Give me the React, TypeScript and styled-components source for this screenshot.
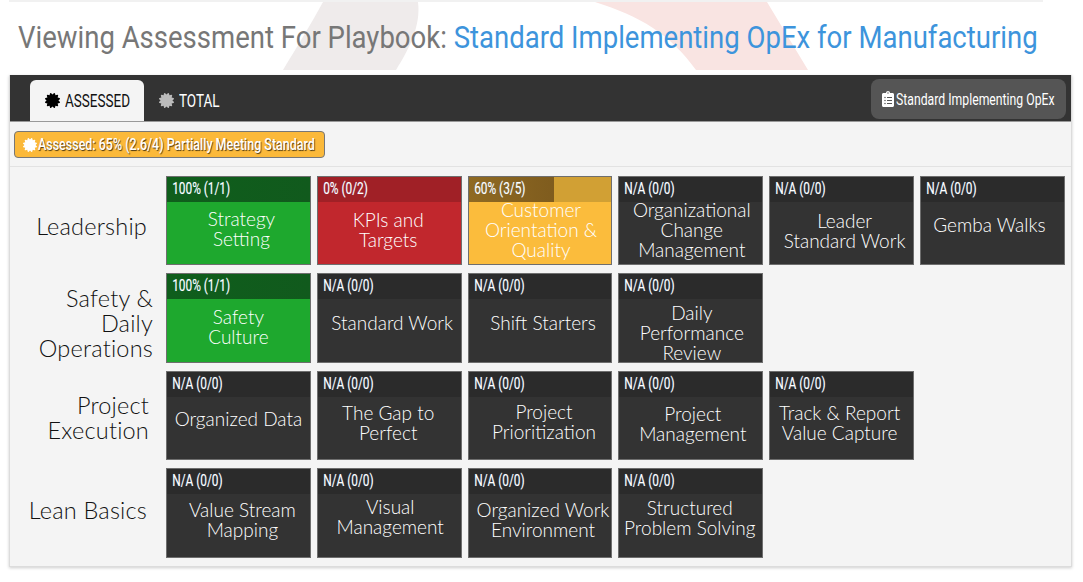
import React from 'react'
import styled, { createGlobalStyle } from 'styled-components'
import { FaCertificate, FaClipboardList } from 'react-icons/fa'

const GlobalStyle = createGlobalStyle`
  html, body {
    margin: 0;
    background: #fff;
    font-family: Roboto, "Liberation Sans", sans-serif;
  }
`

const Page = styled.div`
  width: 1083px;
  height: 582px;
  overflow: hidden;
  position: relative;
`
const Heading = styled.div`
  position: relative;
  height: 75px;
  margin: 0 40px 0 9px;
  box-sizing: border-box;
  border-top: 2px solid #f1f1f1;
  padding: 16px 0 0 9px;
  overflow: hidden;
`
const Watermark = styled.svg`
  position: absolute;
  left: -9px;
  top: -2px;
`
const Title = styled.h1`
  position: relative;
  margin: 0;
  font-size: 32px;
  line-height: 38px;
  font-weight: 400;
  color: #777;
  white-space: nowrap;
  transform: scaleX(0.86);
  transform-origin: left center;
`
const Playbook = styled.span`
  color: #3d94dc;
`
const Panel = styled.div`
  margin-left: 9px;
  width: 1063px;
  height: 492px;
  box-sizing: border-box;
  background: #f4f4f4;
  border: 1px solid #dcdcdc;
  border-top: 0;
  box-shadow: 0 1px 3px rgba(0, 0, 0, 0.2);
`
const TabBar = styled.div`
  height: 47px;
  background: #333;
  border-bottom: 1px solid #999;
  box-sizing: border-box;
  display: flex;
  align-items: flex-end;
  padding: 0 5px 0 20px;
`
const Tab = styled.div<{ $active?: boolean }>`
  width: 114px;
  height: 41px;
  box-sizing: border-box;
  padding-left: 15px;
  display: flex;
  align-items: center;
  gap: 5px;
  border-radius: 6px 6px 0 0;
  background: ${({ $active }) => ($active ? '#f4f4f4' : 'transparent')};
  color: ${({ $active }) => ($active ? '#111' : '#fff')};
  font-size: 18px;
`
const TabLabel = styled.span`
  display: inline-block;
  flex: none;
  transform: scaleX(0.75);
  transform-origin: left center;
`
const TabIcon = styled(FaCertificate)<{ $tone: string }>`
  color: ${({ $tone }) => $tone};
  font-size: 15px;
  flex: none;
`
const PlaybookButton = styled.div`
  margin-left: auto;
  align-self: flex-start;
  margin-top: 4px;
  width: 195px;
  height: 40px;
  box-sizing: border-box;
  border-radius: 8px;
  background: #555;
  color: #fff;
  font-size: 17px;
  display: flex;
  align-items: center;
  padding-left: 9px;
  white-space: nowrap;
  svg {
    flex: none;
  }
`
const ButtonLabel = styled.span`
  display: inline-block;
  flex: none;
  transform: scaleX(0.72);
  transform-origin: left center;
`
const SummaryStrip = styled.div`
  height: 45px;
  box-sizing: border-box;
  border-bottom: 1px solid #e2e2e2;
  padding: 9px 0 0 4px;
`
const Badge = styled.div`
  width: 311px;
  height: 27px;
  box-sizing: border-box;
  background: #fbb93a;
  border: 1px solid #777;
  border-radius: 4px;
  color: #fff;
  font-size: 16px;
  font-weight: 500;
  display: flex;
  align-items: center;
  padding-left: 8px;
  gap: 1px;
  white-space: nowrap;
  text-shadow: 1px 1px 1px rgba(0, 0, 0, 0.7);
  svg {
    flex: none;
  }
`
const BadgeLabel = styled.span`
  display: inline-block;
  flex: none;
  transform: scaleX(0.78);
  transform-origin: left center;
`
const Matrix = styled.div`
  padding-top: 9px;
  display: flex;
  flex-direction: column;
  gap: 8px;
`
const Row = styled.div`
  display: flex;
  height: 89px;
  &:nth-child(even) {
    height: 90px;
  }
`
const RowLabel = styled.div<{ $right: number; $top: number }>`
  width: 156px;
  flex: none;
  box-sizing: border-box;
  padding-right: ${({ $right }) => $right}px;
  margin-top: ${({ $top }) => $top}px;
  align-self: center;
  text-align: right;
  white-space: pre;
  font-family: Lato, sans-serif;
  font-weight: 300;
  font-size: 23.5px;
  letter-spacing: 0.2px;
  line-height: 25px;
  color: #111;
`
const Cards = styled.div`
  display: grid;
  grid-template-columns: repeat(6, 144.8px);
  column-gap: 6px;
`

const palette = {
  green: { body: '#1ea82e', track: '#1a8f28', fill: 'linear-gradient(90deg,#0f5e1c,#115a1d)' },
  red: { body: '#c1272d', track: '#a02026', fill: 'none' },
  yellow: { body: '#fbbc3c', track: '#d1a034', fill: 'linear-gradient(90deg,#8f6a22,#7f5c1e)' },
  dark: { body: '#333', track: '#2b2b2b', fill: 'none' },
}
type Tone = keyof typeof palette

const Card = styled.div<{ $tone: Tone }>`
  box-sizing: border-box;
  border: 1px solid #6e6e6e;
  background: ${({ $tone }) => palette[$tone].body};
  color: #fff;
  overflow: hidden;
`
const ScoreBar = styled.div<{ $tone: Tone }>`
  position: relative;
  height: 25px;
  background: ${({ $tone }) => palette[$tone].track};
`
const ScoreFill = styled.div<{ $tone: Tone }>`
  position: absolute;
  left: 0;
  top: 0;
  bottom: 0;
  background: ${({ $tone }) => palette[$tone].fill};
`
const ScoreText = styled.div`
  position: relative;
  padding-left: 5px;
  font-size: 16px;
  line-height: 24px;
  font-weight: 400;
  white-space: nowrap;
  transform: scaleX(0.74) translateX(2px);
  transform-origin: left center;
  text-shadow: 0 0 1px rgba(140, 200, 255, 0.5);
`
const CardTitle = styled.div<{ $top: number; $shift: number }>`
  margin-top: ${({ $top }) => $top}px;
  margin-left: ${({ $shift }) => Math.max($shift, 0) * 2}px;
  margin-right: ${({ $shift }) => Math.max(-$shift, 0) * 2}px;
  text-align: center;
  white-space: pre;
  font-family: Lato, sans-serif;
  font-size: 19px;
  line-height: 20px;
  font-weight: 300;
`

type CardData = { title: string; score: string; top: number; shift: number; tone?: Tone; fill?: number }

const NA = 'N/A (0/0)'
const rows: { label: string; right: number; top: number; cards: CardData[] }[] = [
  {
    label: 'Leadership',
    right: 19,
    top: 12,
    cards: [
      { title: 'Strategy\nSetting', score: '100% (1/1)', top: 7, shift: 3, tone: 'green', fill: 100 },
      { title: 'KPIs and\nTargets', score: '0% (0/2)', top: 8, shift: -1, tone: 'red', fill: 0 },
      { title: 'Customer\nOrientation &\nQuality', score: '60% (3/5)', top: -2, shift: 1, tone: 'yellow', fill: 60 },
      { title: 'Organizational\nChange\nManagement', score: NA, top: -2, shift: 1 },
      { title: 'Leader\nStandard Work', score: NA, top: 9, shift: 3 },
      { title: 'Gemba Walks', score: NA, top: 13, shift: -3 },
    ],
  },
  {
    label: 'Safety &\nDaily\nOperations',
    right: 13,
    top: 10,
    cards: [
      { title: 'Safety\nCulture', score: '100% (1/1)', top: 8, shift: 0, tone: 'green', fill: 100 },
      { title: 'Standard Work', score: NA, top: 14, shift: 3 },
      { title: 'Shift Starters', score: NA, top: 14, shift: 3 },
      { title: 'Daily\nPerformance\nReview', score: NA, top: 4, shift: 1 },
    ],
  },
  {
    label: 'Project\nExecution',
    right: 17,
    top: 4,
    cards: [
      { title: 'Organized Data', score: NA, top: 12, shift: 0 },
      { title: 'The Gap to\nPerfect', score: NA, top: 6, shift: -1 },
      { title: 'Project\nPrioritization', score: NA, top: 5, shift: 4 },
      { title: 'Project\nManagement', score: NA, top: 7, shift: 2 },
      { title: 'Track & Report\nValue Capture', score: NA, top: 6, shift: -2 },
    ],
  },
  {
    label: 'Lean Basics',
    right: 19,
    top: -6,
    cards: [
      { title: 'Value Stream\nMapping', score: NA, top: 6, shift: 4 },
      { title: 'Visual\nManagement', score: NA, top: 3, shift: 1 },
      { title: 'Organized Work\nEnvironment', score: NA, top: 6, shift: 3 },
      { title: 'Structured\nProblem Solving', score: NA, top: 4, shift: -1 },
    ],
  },
]

export default function App() {
  return (
    <Page>
      <GlobalStyle />
      <Heading>
        <Watermark width="1083" height="71" viewBox="0 0 1083 71">
          <path d="M283 70 C300 42 312 22 323 2 L418 2 C421 25 410 48 396 70 Z" fill="#efebeb" />
          <path d="M595 2 L767 2 L808 70 L696 70 C670 34 640 16 595 2 Z" fill="#f9e4e2" />
        </Watermark>
        <Title>
          Viewing Assessment For Playbook: <Playbook>Standard Implementing OpEx for Manufacturing</Playbook>
        </Title>
      </Heading>
      <Panel>
        <TabBar>
          <Tab $active>
            <TabIcon $tone="#000" />
            <TabLabel>ASSESSED</TabLabel>
          </Tab>
          <Tab>
            <TabIcon $tone="#bbb" />
            <TabLabel>TOTAL</TabLabel>
          </Tab>
          <PlaybookButton>
            <FaClipboardList size={16} />
            <ButtonLabel>Standard Implementing OpEx</ButtonLabel>
          </PlaybookButton>
        </TabBar>
        <SummaryStrip>
          <Badge>
            <FaCertificate size={14} />
            <BadgeLabel>Assessed: 65% (2.6/4) Partially Meeting Standard</BadgeLabel>
          </Badge>
        </SummaryStrip>
        <Matrix>
          {rows.map((row) => (
            <Row key={row.label}>
              <RowLabel $right={row.right} $top={row.top}>{row.label}</RowLabel>
              <Cards>
                {row.cards.map((card) => {
                  const tone = card.tone ?? 'dark'
                  return (
                    <Card key={card.title} $tone={tone}>
                      <ScoreBar $tone={tone}>
                        <ScoreFill $tone={tone} style={{ width: `${card.fill ?? 0}%` }} />
                        <ScoreText>{card.score}</ScoreText>
                      </ScoreBar>
                      <CardTitle $top={card.top} $shift={card.shift}>{card.title}</CardTitle>
                    </Card>
                  )
                })}
              </Cards>
            </Row>
          ))}
        </Matrix>
      </Panel>
    </Page>
  )
}
